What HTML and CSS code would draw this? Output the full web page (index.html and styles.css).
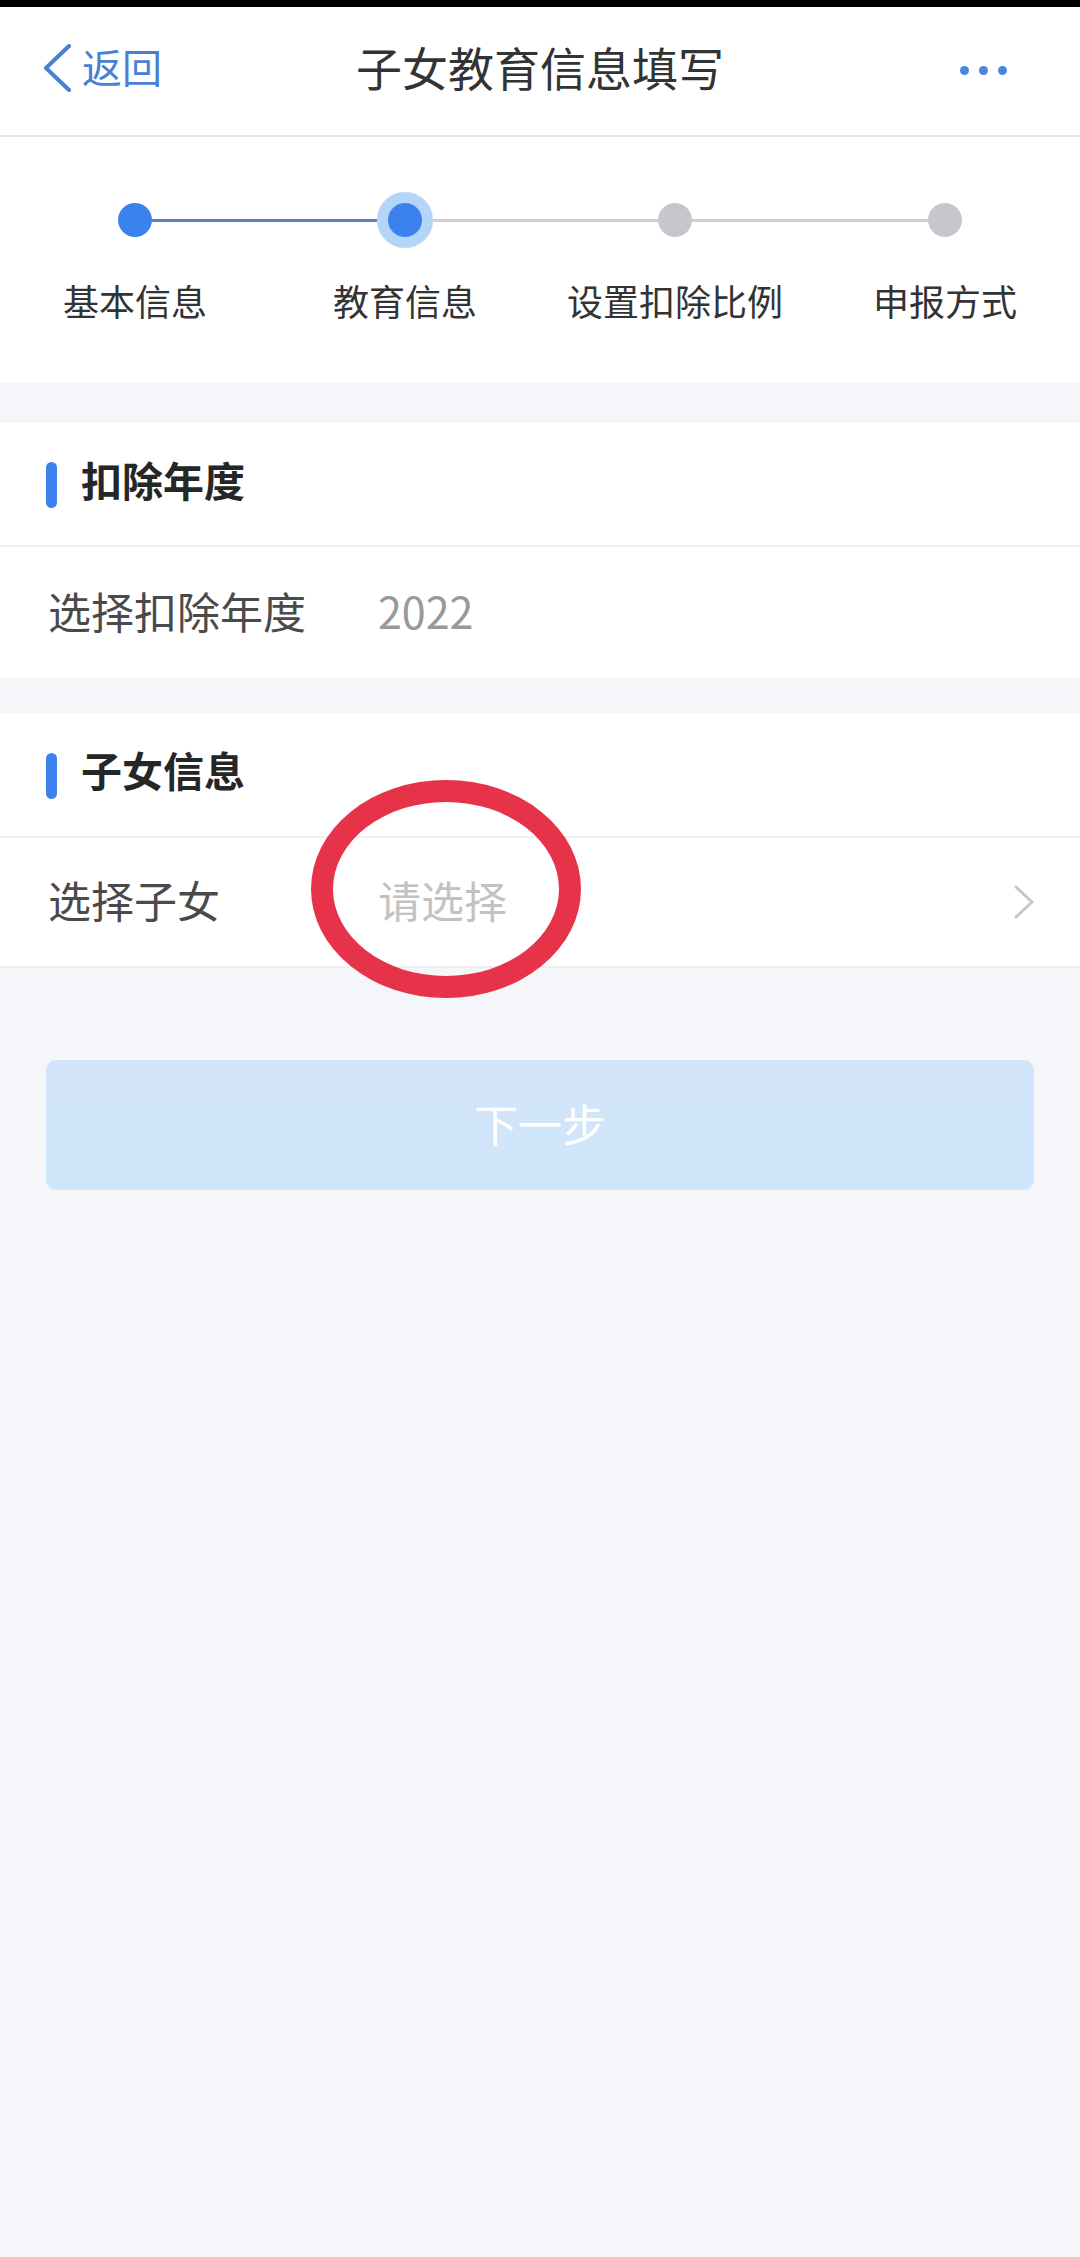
FILE: index.html
```html
<!DOCTYPE html>
<html lang="zh-CN">
<head>
<meta charset="utf-8">
<title>子女教育信息填写</title>
<link rel="stylesheet" href="styles.css">
</head>
<body>
<div class="statusbar"></div>
<header class="navbar">
  <div class="nav-back">
    <svg class="back-icon" width="28" height="48" viewBox="0 0 28 48"><polyline points="25,2 2,24 25,46" fill="none" stroke="#4a80d4" stroke-width="4" stroke-linecap="round" stroke-linejoin="round"/></svg>
    <span class="back-text">返回</span>
  </div>
  <div class="nav-title">子女教育信息填写</div>
  <div class="nav-more">
    <span class="mdot"></span><span class="mdot"></span><span class="mdot"></span>
  </div>
</header>

<section class="stepper">
  <div class="step">
    <div class="track"><span class="line none"></span><span class="dot done"></span><span class="line blue"></span></div>
    <div class="step-label">基本信息</div>
  </div>
  <div class="step">
    <div class="track"><span class="line blue"></span><span class="dot current"></span><span class="line gray"></span></div>
    <div class="step-label">教育信息</div>
  </div>
  <div class="step">
    <div class="track"><span class="line gray"></span><span class="dot todo"></span><span class="line gray"></span></div>
    <div class="step-label">设置扣除比例</div>
  </div>
  <div class="step">
    <div class="track"><span class="line gray"></span><span class="dot todo"></span><span class="line none"></span></div>
    <div class="step-label">申报方式</div>
  </div>
</section>

<section class="card card-first">
  <div class="card-head"><span class="head-bar"></span><span class="head-text">扣除年度</span></div>
  <div class="row row-year">
    <span class="row-label">选择扣除年度</span>
    <span class="row-value">2022</span>
  </div>
</section>

<section class="card card-second">
  <div class="card-head"><span class="head-bar"></span><span class="head-text">子女信息</span></div>
  <div class="row row-child">
    <span class="row-label">选择子女</span>
    <span class="row-value placeholder">请选择</span>
    <svg class="chevron" width="22" height="34" viewBox="0 0 22 34"><polyline points="3,2 19,17 3,32" fill="none" stroke="#c6c6c6" stroke-width="3" stroke-linecap="round" stroke-linejoin="round"/></svg>
    <span class="mark-circle"></span>
  </div>
</section>

<div class="actions">
  <button class="next-btn" type="button">下一步</button>
</div>
</body>
</html>
```

FILE: styles.css
```css
html, body {
  margin: 0;
  padding: 0;
}
body {
  width: 1080px;
  min-height: 2257px;
  background: #f5f6f9;
  font-family: "Noto Sans CJK SC", "Noto Sans", sans-serif;
  color: #333;
}

.statusbar {
  height: 7px;
  background: #000;
}

.navbar {
  height: 128px;
  background: #fff;
  border-bottom: 2px solid #e6e6e6;
  display: grid;
  grid-template-columns: 1fr auto 1fr;
  align-items: center;
}
.nav-back {
  display: flex;
  align-items: center;
  padding-left: 44px;
  padding-bottom: 6px;
  gap: 10px;
}
.back-icon {
  display: block;
}
.back-text {
  font-size: 40px;
  line-height: 1;
  color: #4a80d4;
  padding-bottom: 4px;
}
.nav-title {
  font-size: 46px;
  line-height: 1;
  color: #333;
  padding-bottom: 10px;
}
.nav-more {
  justify-self: end;
  display: flex;
  gap: 10px;
  padding-right: 73px;
  padding-bottom: 2px;
}
.mdot {
  width: 9px;
  height: 9px;
  border-radius: 50%;
  background: #4a86e0;
}

.stepper {
  background: #fff;
  height: 246px;
  display: grid;
  grid-template-columns: repeat(4, 1fr);
  box-sizing: border-box;
  padding-top: 54px;
}
.step {
  display: flex;
  flex-direction: column;
  align-items: center;
}
.track {
  width: 100%;
  height: 58px;
  display: flex;
  align-items: center;
}
.line {
  flex: 1;
  height: 3px;
}
.line.blue { background: #5482c4; }
.line.gray { background: #cfcfd2; }
.line.none { background: transparent; }
.dot {
  width: 34px;
  height: 34px;
  border-radius: 50%;
  flex: none;
}
.dot.done { background: #3b82ec; }
.dot.todo { background: #c5c7cd; }
.dot.current {
  background: #3b82ec;
  border: 11px solid #b4d4f8;
}
.step-label {
  margin-top: 26px;
  font-size: 36px;
  line-height: 50px;
  color: #333;
  white-space: nowrap;
}

.card {
  background: #fff;
}
.card-first {
  margin-top: 40px;
}
.card-second {
  margin-top: 35px;
}
.card-head {
  height: 122px;
  border-bottom: 2px solid #efefef;
  display: flex;
  align-items: center;
  padding-left: 46px;
  gap: 24px;
}
.card-second .card-head {
  height: 123px;
}
.head-bar {
  width: 11px;
  height: 46px;
  border-radius: 6px;
  background: #3c82ef;
  margin-top: 2px;
}
.head-text {
  font-size: 41px;
  font-weight: 700;
  line-height: 1;
  color: #262626;
  padding-bottom: 10px;
}

.row {
  display: flex;
  align-items: center;
  padding-left: 48px;
  padding-right: 45px;
  font-size: 43px;
  line-height: 1;
}
.row-year {
  height: 131px;
}
.row-child {
  position: relative;
  height: 128px;
  border-bottom: 2px solid #ececec;
}
.row-label {
  width: 330px;
  color: #4a4a4a;
  flex: none;
  padding-bottom: 5px;
}
.row-value {
  color: #999;
  flex: 1;
  padding-bottom: 5px;
}
.row-value.placeholder {
  color: #c2c2c2;
}
.chevron {
  display: block;
}

.mark-circle {
  position: absolute;
  left: 311px;
  top: -58px;
  width: 226px;
  height: 174px;
  border: 22px solid #e6334a;
  border-radius: 50%;
  pointer-events: none;
}

.actions {
  padding: 92px 46px 0;
}
.next-btn {
  display: block;
  width: 100%;
  height: 130px;
  border: none;
  border-radius: 10px;
  background: linear-gradient(180deg, #d4e5fb 0%, #cee6f9 100%);
  color: #fff;
  font-family: "Noto Sans CJK SC", "Noto Sans", sans-serif;
  font-size: 44px;
  line-height: 1;
  padding: 0 0 4px;
}
```
